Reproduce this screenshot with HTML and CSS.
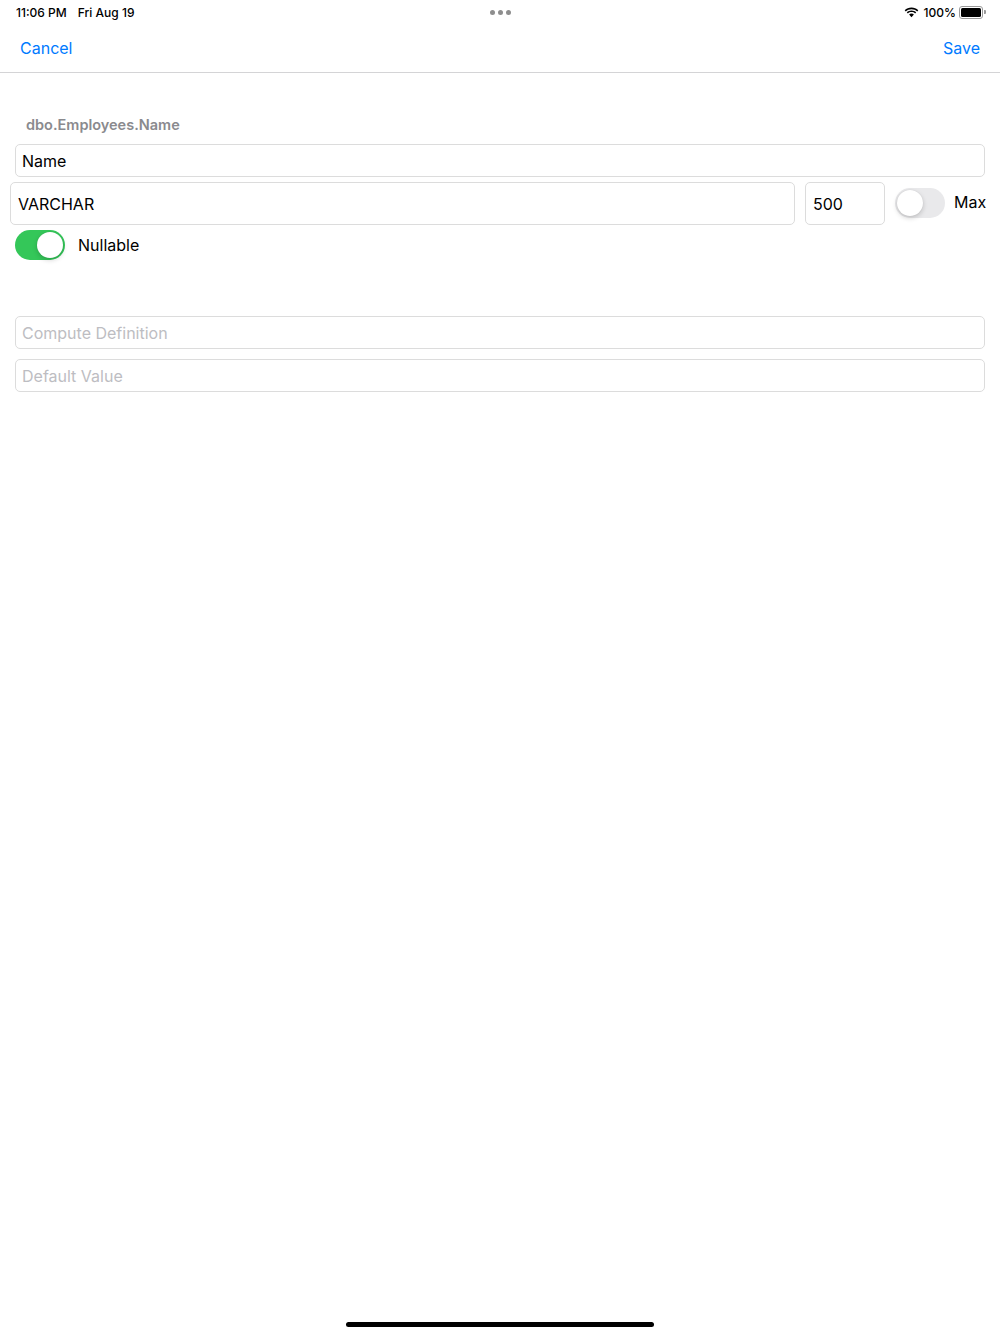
FILE: index.html
```html
<!DOCTYPE html>
<html lang="en">
<head>
    <meta charset="UTF-8">
    <meta name="viewport" content="width=device-width, initial-scale=1.0">
    <title>Edit Column</title>
    <link rel="stylesheet" href="styles.css">
</head>
<body>
    <div class="screen">
        <div class="status-bar">
            <div class="status-left">
                <span>11:06 PM</span>
                <span>Fri Aug 19</span>
            </div>
            <div class="status-dots"><i></i><i></i><i></i></div>
            <div class="status-right">
                <svg class="wifi" width="15" height="11" viewBox="0 0 15 11">
                    <path d="M7.5 2.2c2.2 0 4.2.85 5.7 2.25l1.1-1.15C12.5 1.6 10.1.6 7.5.6S2.5 1.6.7 3.3l1.1 1.15C3.3 3.05 5.3 2.2 7.5 2.2z" fill="#000"/>
                    <path d="M7.5 5.1c1.4 0 2.65.52 3.6 1.4l1.1-1.15C10.950 4.2 9.3 3.5 7.5 3.5S4.05 4.2 2.8 5.35l1.1 1.15c.95-.88 2.2-1.4 3.6-1.4z" fill="#000"/>
                    <path d="M7.5 6.6C8.4 6.6 9.25 7 9.9 7.6L7.5 10.2 5.1 7.6C5.75 7 6.6 6.6 7.5 6.6z" fill="#000"/>
                </svg>
                <span>100%</span>
                <div class="battery"><div class="battery-level"></div></div>
            </div>
        </div>

        <div class="nav-bar">
            <a class="nav-btn">Cancel</a>
            <a class="nav-btn">Save</a>
        </div>

        <div class="form">
            <div class="section-label">dbo.Employees.Name</div>
            <div class="field field-name">Name</div>

            <div class="type-row">
                <div class="field field-type">VARCHAR</div>
                <div class="field field-size">500</div>
                <div class="toggle"><div class="knob"></div></div>
                <span class="toggle-label max-label">Max</span>
            </div>

            <div class="nullable-row">
                <div class="toggle on"><div class="knob"></div></div>
                <span class="toggle-label">Nullable</span>
            </div>

            <div class="field placeholder field-compute">Compute Definition</div>
            <div class="field placeholder">Default Value</div>
        </div>

        <div class="home-indicator"></div>
    </div>
</body>
</html>
```

FILE: styles.css
```css
body {
    margin: 0;
    font-family: Inter, "Noto Sans", "Liberation Sans", sans-serif;
    color: #000;
    background-color: #fff;
}
.screen {
    width: 1000px;
    height: 1334px;
    display: flex;
    flex-direction: column;
}
.status-bar {
    height: 24px;
    padding: 0 15px 0 16px;
    display: flex;
    align-items: center;
    justify-content: space-between;
    font-size: 12px;
    font-weight: 500;
}
.status-left {
    display: flex;
    gap: 11px;
    width: 200px;
}
.status-dots {
    display: flex;
    gap: 3px;
}
.status-dots i {
    width: 5px;
    height: 5px;
    border-radius: 50%;
    background-color: #8e8e8e;
}
.status-right {
    width: 200px;
    display: flex;
    align-items: center;
    justify-content: flex-end;
    gap: 3px;
}
.wifi {
    margin-right: 2px;
}
.battery {
    width: 20px;
    height: 9px;
    border: 1px solid #9a9a9a;
    border-radius: 3px;
    padding: 1px;
    position: relative;
    margin-right: 2px;
}
.battery::after {
    content: "";
    position: absolute;
    right: -3.5px;
    top: 3px;
    width: 1.5px;
    height: 4px;
    background-color: #9a9a9a;
    border-radius: 0 1px 1px 0;
}
.battery-level {
    width: 100%;
    height: 100%;
    background-color: #000;
    border-radius: 1.5px;
}
.nav-bar {
    height: 48px;
    padding: 0 20px;
    display: flex;
    align-items: center;
    justify-content: space-between;
    border-bottom: 1px solid #d4d4d6;
}
.nav-btn {
    color: #007aff;
    font-size: 16px;
    cursor: pointer;
}
.form {
    display: flex;
    flex-direction: column;
    padding-top: 43px;
}
.section-label {
    padding-left: 26px;
    font-size: 14.5px;
    line-height: 18px;
    font-weight: 600;
    color: #8a8a8e;
    margin-bottom: 10px;
}
.field {
    height: 31px;
    border: 1px solid #dcdcdc;
    border-radius: 5px;
    margin: 0 15px;
    padding: 0 6px;
    display: flex;
    align-items: center;
    font-size: 16px;
}
.field.placeholder {
    color: #bdbdc2;
}
.type-row {
    display: flex;
    align-items: center;
    gap: 10px;
    margin: 5px 15px 0 10px;
}
.type-row .field {
    height: 41px;
    margin: 0;
    padding: 0 7px;
}
.field-type {
    flex: 1;
}
.field-size {
    width: 64px;
}
.type-row .toggle {
    margin-right: -1px;
    margin-top: -2px;
}
.toggle {
    width: 50px;
    height: 30px;
    border-radius: 15px;
    background-color: #e9e9eb;
    display: flex;
    align-items: center;
    padding: 0 2px;
    box-sizing: border-box;
    flex-shrink: 0;
}
.toggle.on {
    background-color: #34c759;
    justify-content: flex-end;
}
.knob {
    width: 26px;
    height: 26px;
    border-radius: 50%;
    background-color: #fff;
    box-shadow: 0 2px 5px rgba(0,0,0,0.18), 0 0 1px rgba(0,0,0,0.12);
}
.toggle-label {
    font-size: 16px;
}
.max-label {
    width: 31px;
    margin-top: -4px;
    white-space: nowrap;
}
.nullable-row {
    display: flex;
    align-items: center;
    gap: 13px;
    margin: 4px 15px 0 15px;
    height: 31px;
}
.field-compute {
    margin-top: 56px;
    margin-bottom: 10px;
}
.home-indicator {
    margin: auto auto 7px auto;
    width: 308px;
    height: 5px;
    border-radius: 3px;
    background-color: #000;
}
```
